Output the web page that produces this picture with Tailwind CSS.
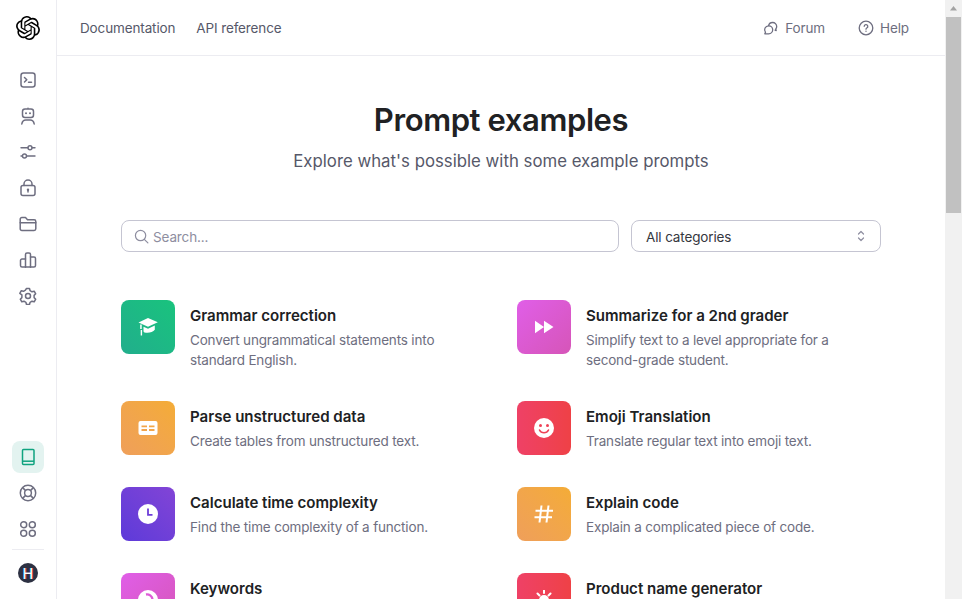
<!DOCTYPE html>
<html lang="en">
<head>
    <meta charset="UTF-8">
    <meta name="viewport" content="width=device-width, initial-scale=1.0">
    <title>Prompt examples - OpenAI API</title>
    <script src="https://cdn.jsdelivr.net/npm/@tailwindcss/browser@4"></script>
</head>
<body class="h-[599px] w-[962px] overflow-hidden bg-white font-['Inter',sans-serif] text-[#202123]">
<div class="flex h-[599px]">
    <!-- Sidebar -->
    <aside class="flex h-full w-[57px] shrink-0 flex-col items-center border-r border-[#ececf1] pt-4 pb-4 text-[#6e6e80]">
        <svg class="h-6 w-6 text-black" viewBox="0 0 24 24" fill="currentColor"><path d="M22.2819 9.8211a5.9847 5.9847 0 0 0-.5157-4.9108 6.0462 6.0462 0 0 0-6.5098-2.9A6.0651 6.0651 0 0 0 4.9807 4.1818a5.9847 5.9847 0 0 0-3.9977 2.9 6.0462 6.0462 0 0 0 .7427 7.0966 5.98 5.98 0 0 0 .511 4.9107 6.051 6.051 0 0 0 6.5146 2.9001A5.9847 5.9847 0 0 0 13.2599 24a6.0557 6.0557 0 0 0 5.7718-4.2058 5.9894 5.9894 0 0 0 3.9977-2.9001 6.0557 6.0557 0 0 0-.7475-7.0729zm-9.022 12.6081a4.4755 4.4755 0 0 1-2.8764-1.0408l.1419-.0804 4.7783-2.7582a.7948.7948 0 0 0 .3927-.6813v-6.7369l2.02 1.1686a.071.071 0 0 1 .038.052v5.5826a4.504 4.504 0 0 1-4.4945 4.4944zm-9.6607-4.1254a4.4708 4.4708 0 0 1-.5346-3.0137l.142.0852 4.783 2.7582a.7712.7712 0 0 0 .7806 0l5.8428-3.3685v2.3324a.0804.0804 0 0 1-.0332.0615L9.74 19.9502a4.4992 4.4992 0 0 1-6.1408-1.6464zM2.3408 7.8956a4.485 4.485 0 0 1 2.3655-1.9728V11.6a.7664.7664 0 0 0 .3879.6765l5.8144 3.3543-2.0201 1.1685a.0757.0757 0 0 1-.071 0l-4.8303-2.7865A4.504 4.504 0 0 1 2.3408 7.872zm16.5963 3.8558L13.1038 8.364 15.1192 7.2a.0757.0757 0 0 1 .071 0l4.8303 2.7913a4.4944 4.4944 0 0 1-.6765 8.1042v-5.6772a.79.79 0 0 0-.407-.667zm2.0107-3.0231l-.142-.0852-4.7735-2.7818a.7759.7759 0 0 0-.7854 0L9.409 9.2297V6.8974a.0662.0662 0 0 1 .0284-.0615l4.8303-2.7866a4.4992 4.4992 0 0 1 6.6802 4.66zM8.3065 12.863l-2.02-1.1638a.0804.0804 0 0 1-.038-.0567V6.0742a4.4992 4.4992 0 0 1 7.3757-3.4537l-.142.0805L8.704 5.459a.7948.7948 0 0 0-.3927.6813zm1.0976-2.3654l2.602-1.4998 2.6069 1.4998v2.9994l-2.5974 1.4997-2.6067-1.4997Z"/></svg>

        <nav class="mt-[22px] flex flex-col">
            <!-- terminal -->
            <span class="flex h-9 w-8 items-center justify-center">
                <svg class="h-[18px] w-[18px]" viewBox="0 0 18 18" fill="none" stroke="currentColor" stroke-width="1.5" stroke-linecap="round" stroke-linejoin="round"><rect x="2" y="2" width="14" height="14" rx="2.5"/><path d="M5.5 6.5 7.8 8.7 5.5 11"/><path d="M9.5 11.2h3"/></svg>
            </span>
            <!-- robot -->
            <span class="flex h-9 w-8 items-center justify-center">
                <svg class="h-[18px] w-[18px]" viewBox="0 0 18 18" fill="none" stroke="currentColor" stroke-width="1.5" stroke-linecap="round" stroke-linejoin="round"><rect x="3.500" y="2" width="11" height="8.500" rx="2.500"/><path d="M2.800 17c.4-2.400 2-4 4-4h4.400c2 0 3.600 1.600 4 4"/><circle cx="7" cy="6.200" r="1" fill="currentColor" stroke="none"/><circle cx="11" cy="6.200" r="1" fill="currentColor" stroke="none"/><circle cx="9" cy="1.200" r=".8" fill="currentColor" stroke="none"/></svg>
            </span>
            <!-- sliders -->
            <span class="flex h-9 w-8 items-center justify-center">
                <svg class="h-[18px] w-[18px]" viewBox="0 0 18 18" fill="none" stroke="currentColor" stroke-width="1.4" stroke-linecap="round"><path d="M2 4.800h7M13 4.800h3M2 13h1.500M7.500 13H16"/><circle cx="11" cy="4.800" r="2"/><circle cx="5.500" cy="13" r="2"/></svg>
            </span>
            <!-- lock -->
            <span class="flex h-9 w-8 items-center justify-center">
                <svg class="h-[18px] w-[18px]" viewBox="0 0 18 18" fill="none" stroke="currentColor" stroke-width="1.500" stroke-linecap="round" stroke-linejoin="round"><rect x="2" y="6.500" width="14" height="10" rx="2"/><path d="M5 6.500V5a4 4 0 0 1 8 0v1.500"/><circle cx="9" cy="10.800" r="1.200" fill="currentColor" stroke="none"/><path d="M9 11v2"/></svg>
            </span>
            <!-- folder -->
            <span class="flex h-9 w-8 items-center justify-center">
                <svg class="h-[18px] w-[18px]" viewBox="0 0 18 18" fill="none" stroke="currentColor" stroke-width="1.500" stroke-linecap="round" stroke-linejoin="round"><path d="M1.200 4.200c0-1 .8-1.700 1.700-1.700h3.600l2 2.200h6.600c1 0 1.700.8 1.700 1.700v7.400c0 1-.8 1.700-1.700 1.700H2.900c-1 0-1.700-.8-1.700-1.700Z"/><path d="M1.200 7.800h15.600"/></svg>
            </span>
            <!-- chart -->
            <span class="flex h-9 w-8 items-center justify-center">
                <svg class="h-[18px] w-[18px]" viewBox="0 0 18 18" fill="none" stroke="currentColor" stroke-width="1.500" stroke-linecap="round" stroke-linejoin="round"><path d="M6.500 16V3.500A1.500 1.500 0 0 1 8 2h2a1.500 1.500 0 0 1 1.500 1.500V16"/><path d="M6.500 16H3a1.500 1.500 0 0 1-1.500-1.500V9.500A1.500 1.500 0 0 1 3 8h3.500"/><path d="M11.500 16H15a1.500 1.500 0 0 0 1.500-1.500v-7A1.500 1.500 0 0 0 15 6h-3.500"/><path d="M6.500 16h5"/></svg>
            </span>
            <!-- gear -->
            <span class="flex h-9 w-8 items-center justify-center">
                <svg class="h-[18px] w-[18px]" viewBox="0 0 18 18" fill="none" stroke="currentColor" stroke-width="1.500" stroke-linecap="round" stroke-linejoin="round"><circle cx="9" cy="9" r="2.500"/><path d="M7.500 1.500h3l.6 2.200 1.900 1.100 2.200-.6 1.500 2.600-1.600 1.600v2.200l1.600 1.600-1.500 2.600-2.200-.6-1.900 1.100-.6 2.200h-3l-.6-2.200-1.900-1.100-2.200.6-1.500-2.600 1.600-1.600V7.900L.8 6.300l1.500-2.600 2.200.6 1.900-1.100Z"/></svg>
            </span>
        </nav>

        <div class="mt-auto flex flex-col items-center gap-1">
            <span class="flex h-8 w-8 items-center justify-center rounded-lg bg-[#e3f3f0] text-[#10a37f]">
                <svg class="h-[18px] w-[18px]" viewBox="0 0 18 18" fill="none" stroke="currentColor" stroke-width="1.500" stroke-linejoin="round"><rect x="3.500" y="1.500" width="11.500" height="15" rx="1"/><path d="M3.500 13.200H15"/></svg>
            </span>
            <span class="flex h-8 w-8 items-center justify-center">
                <svg class="h-[18px] w-[18px]" viewBox="0 0 18 18" fill="none" stroke="currentColor" stroke-width="1.500"><circle cx="9" cy="9" r="7.700"/><circle cx="9" cy="9" r="3.400"/><path d="m3.600 3.600 3 3M14.400 3.600l-3 3M3.600 14.400l3-3M14.400 14.400l-3-3"/></svg>
            </span>
            <span class="flex h-8 w-8 items-center justify-center">
                <svg class="h-[18px] w-[18px]" viewBox="0 0 18 18" fill="none" stroke="currentColor" stroke-width="1.500"><circle cx="4.700" cy="4.700" r="3"/><circle cx="13.300" cy="4.700" r="3"/><circle cx="4.700" cy="13.300" r="3"/><circle cx="13.300" cy="13.300" r="3"/></svg>
            </span>
        </div>
        <div class="mt-1 h-px w-8 bg-[#ececf1]"></div>
        <div class="mt-[13px] flex h-5 w-5 items-center justify-center rounded-full bg-[#2d3142] text-[14px] font-normal text-white [text-shadow:-0.6px_0_#38bdf8,0.6px_0_#ef4444]">H</div>
    </aside>

    <!-- Main -->
    <div class="flex h-full w-[888px] shrink-0 flex-col overflow-hidden">
        <header class="flex h-[56px] shrink-0 items-center justify-between border-b border-[#ececf1] pr-9 pl-[23px] text-[13.5px] tracking-[-0.13px] text-[#565869]">
            <div class="flex gap-[21px] pt-px">
                <a>Documentation</a>
                <a>API reference</a>
            </div>
            <div class="flex gap-[33px]">
                <a class="flex items-center gap-1.5 text-[#6e6e80]">
                    <svg class="h-4 w-4" viewBox="0 0 16 16" fill="none" stroke="currentColor" stroke-width="1.300" stroke-linejoin="round"><path d="M5.500 6.200A4.200 4.200 0 0 1 9.700 2.500a4.100 4.100 0 0 1 4 4c0 1-.3 1.800-.9 2.500l.4 1.500-1.600-.3"/><path d="M5.700 5.800a4 4 0 0 1 4 4 4 4 0 0 1-4 4H1.800l.7-1.500a4 4 0 0 1 3.200-6.500Z"/></svg>
                    <span class="pt-px">Forum</span>
                </a>
                <a class="flex items-center gap-1.5 text-[#6e6e80]">
                    <svg class="h-4 w-4" viewBox="0 0 16 16" fill="none" stroke="currentColor" stroke-width="1.300" stroke-linecap="round"><circle cx="8" cy="8" r="6.800"/><path d="M6.200 6.300A1.800 1.800 0 1 1 8.800 8c-.5.300-.8.600-.8 1.200"/><circle cx="8" cy="11.300" r=".7" fill="currentColor" stroke="none"/></svg>
                    <span class="pt-px">Help</span>
                </a>
            </div>
        </header>

        <main class="px-16 pt-[44px]">
            <h1 class="text-center text-[31px] leading-10 font-semibold tracking-[-0.4px] text-[#202123]">Prompt examples</h1>
            <p class="mt-[9px] text-center text-[16.8px] leading-6 text-[#565869]">Explore what's possible with some example prompts</p>

            <div class="mt-[47px] flex gap-3">
                <div class="flex h-8 w-[498px] items-center gap-1 rounded-lg border border-[#c5c5d2] px-3 text-[13.5px] tracking-[-0.13px] text-[#8e8ea0]">
                    <svg class="h-[15px] w-[15px]" viewBox="0 0 16 16" fill="none" stroke="currentColor" stroke-width="1.300" stroke-linecap="round"><circle cx="7" cy="7" r="5.500"/><path d="m11 11 3.800 3.800"/></svg>
                    <span class="pt-0.5">Search...</span>
                </div>
                <div class="flex h-8 w-[250px] items-center justify-between rounded-lg border border-[#c5c5d2] pr-3 pl-[14px] text-[13.5px] tracking-[-0.13px] text-[#353740]">
                    <span class="pt-0.5">All categories</span>
                    <svg class="h-3.5 w-3.5 text-[#8e8ea0]" viewBox="0 0 14 14" fill="none" stroke="currentColor" stroke-width="1.200" stroke-linecap="round" stroke-linejoin="round"><path d="m4.500 5 2.500-2.500L9.500 5M4.500 9l2.500 2.500L9.500 9"/></svg>
                </div>
            </div>

            <div class="mt-12 grid grid-cols-[380px_380px] gap-x-4 gap-y-8">
                <div class="flex gap-[15px]">
                    <div class="flex h-[54px] w-[54px] shrink-0 items-center justify-center rounded-lg bg-gradient-to-tr from-[#21ae8c] to-[#19c37d] text-white">
                        <svg class="h-5 w-5" viewBox="0 0 20 20" fill="currentColor"><path d="M10 1 19.800 5.200 10 9.800 .5 5.400Z"/><path d="M5.500 9.800 10 11.800 16.800 8.600v4.200c-2 2.500-6.300 3.700-10.300 2.700-.6-.2-1-.6-1-1.200Z"/><path d="M2.200 7.500h1.500v4.500H2.200ZM2.700 13h1.400v5.500H2.700Z"/></svg>
                    </div>
                    <div class="pt-[5px]">
                        <h3 class="text-[15.05px] leading-[22px] font-semibold">Grammar correction</h3>
                        <p class="mt-[3px] -mb-px w-[270px] text-[13.5px] leading-5 tracking-[-0.17px] text-[#6e6e80]">Convert ungrammatical statements into standard English.</p>
                    </div>
                </div>
                <div class="flex gap-[15px]">
                    <div class="flex h-[54px] w-[54px] shrink-0 items-center justify-center rounded-lg bg-gradient-to-br from-[#e05ee8] to-[#d655b8] text-white">
                        <svg class="h-5 w-5" viewBox="0 0 20 20" fill="currentColor"><path d="M1 3.800 10 10 1 16.200ZM10 3.800 19.500 10 10 16.200Z"/></svg>
                    </div>
                    <div class="pt-[5px]">
                        <h3 class="text-[15.05px] leading-[22px] font-semibold">Summarize for a 2nd grader</h3>
                        <p class="mt-[3px] -mb-px w-[270px] text-[13.5px] leading-5 tracking-[-0.17px] text-[#6e6e80]">Simplify text to a level appropriate for a second-grade student.</p>
                    </div>
                </div>
                <div class="flex gap-[15px]">
                    <div class="flex h-[54px] w-[54px] shrink-0 items-center justify-center rounded-lg bg-gradient-to-bl from-[#f4ac36] to-[#ef9f5a] text-white">
                        <svg class="h-5 w-5" viewBox="0 0 20 20" fill="currentColor"><path fill-rule="evenodd" d="M2.500 3h15A2 2 0 0 1 19.500 5v10a2 2 0 0 1-2 2h-15a2 2 0 0 1-2-2V5a2 2 0 0 1 2-2ZM3.500 7.500v1.800h5.500V7.500Zm7.500 0v1.800h5.500V7.500Zm-7.500 3.600v1.800h5.500v-1.800Zm7.500 0v1.800h5.500v-1.800Z"/></svg>
                    </div>
                    <div class="pt-[5px]">
                        <h3 class="text-[15.05px] leading-[22px] font-semibold">Parse unstructured data</h3>
                        <p class="mt-[3px] -mb-px text-[13.5px] leading-5 tracking-[-0.17px] text-[#6e6e80]">Create tables from unstructured text.</p>
                    </div>
                </div>
                <div class="flex gap-[15px]">
                    <div class="flex h-[54px] w-[54px] shrink-0 items-center justify-center rounded-lg bg-gradient-to-r from-[#ef4166] to-[#ef4146] text-white">
                        <svg class="h-5 w-5" viewBox="0 0 20 20"><circle cx="10" cy="10" r="10" fill="currentColor"/><circle cx="6.500" cy="7.500" r="1.500" fill="#ef4156"/><circle cx="13.500" cy="7.500" r="1.500" fill="#ef4156"/><path d="M5.500 12a5 5 0 0 0 9 0" fill="none" stroke="#ef4156" stroke-width="1.600" stroke-linecap="round"/></svg>
                    </div>
                    <div class="pt-[5px]">
                        <h3 class="text-[15.05px] leading-[22px] font-semibold">Emoji Translation</h3>
                        <p class="mt-[3px] -mb-px text-[13.5px] leading-5 tracking-[-0.17px] text-[#6e6e80]">Translate regular text into emoji text.</p>
                    </div>
                </div>
                <div class="flex gap-[15px]">
                    <div class="flex h-[54px] w-[54px] shrink-0 items-center justify-center rounded-lg bg-gradient-to-tr from-[#5d3ad9] to-[#8244d6] text-white">
                        <svg class="h-5 w-5" viewBox="0 0 20 20"><circle cx="10" cy="10" r="10" fill="currentColor"/><path d="M10 4.500V10.800h4.500" fill="none" stroke="#6d3dd8" stroke-width="1.800"/></svg>
                    </div>
                    <div class="pt-[5px]">
                        <h3 class="text-[15.05px] leading-[22px] font-semibold">Calculate time complexity</h3>
                        <p class="mt-[3px] -mb-px text-[13.5px] leading-5 tracking-[-0.17px] text-[#6e6e80]">Find the time complexity of a function.</p>
                    </div>
                </div>
                <div class="flex gap-[15px]">
                    <div class="flex h-[54px] w-[54px] shrink-0 items-center justify-center rounded-lg bg-gradient-to-bl from-[#f4ac36] to-[#ef9f5a] text-white">
                        <svg class="h-5 w-5" viewBox="0 0 20 20" fill="none" stroke="currentColor" stroke-width="2"><path d="M7.500 1.500 5.500 18.500M14.500 1.500l-2 17M1.500 6.800h17.500M.5 13.200h17.500"/></svg>
                    </div>
                    <div class="pt-[5px]">
                        <h3 class="text-[15.05px] leading-[22px] font-semibold">Explain code</h3>
                        <p class="mt-[3px] -mb-px text-[13.5px] leading-5 tracking-[-0.17px] text-[#6e6e80]">Explain a complicated piece of code.</p>
                    </div>
                </div>
                <div class="flex gap-[15px]">
                    <div class="flex h-[54px] w-[54px] shrink-0 items-center justify-center rounded-lg bg-gradient-to-br from-[#e05ee8] to-[#d655b8] text-white">
                        <svg class="h-5 w-5" viewBox="0 0 20 20"><circle cx="10" cy="10" r="10" fill="currentColor"/><path d="M8 4.500a5.500 5.500 0 0 1 6.500 4.500" fill="none" stroke="#de5cd8" stroke-width="2.400"/></svg>
                    </div>
                    <div class="pt-[5px]">
                        <h3 class="text-[15.05px] leading-[22px] font-semibold">Keywords</h3>
                        <p class="mt-[3px] -mb-px text-[13.5px] leading-5 tracking-[-0.17px] text-[#6e6e80]">Extract keywords from a block of text.</p>
                    </div>
                </div>
                <div class="flex gap-[15px]">
                    <div class="flex h-[54px] w-[54px] shrink-0 items-center justify-center rounded-lg bg-gradient-to-r from-[#ef4166] to-[#ef4146] text-white">
                        <svg class="h-5 w-5" viewBox="0 0 20 20" fill="currentColor"><circle cx="10" cy="10" r="5"/><path d="M10 .5v2.500M3.500 3.500l2 2M16.500 3.500l-2 2M.5 10h2.500M17 10h2.500" stroke="currentColor" stroke-width="2" stroke-linecap="round"/></svg>
                    </div>
                    <div class="pt-[5px]">
                        <h3 class="text-[15.05px] leading-[22px] font-semibold">Product name generator</h3>
                        <p class="mt-[3px] -mb-px text-[13.5px] leading-5 tracking-[-0.17px] text-[#6e6e80]">Create product names from a description.</p>
                    </div>
                </div>
            </div>
        </main>
    </div>

    <!-- Scrollbar -->
    <div class="flex h-full w-[17px] shrink-0 flex-col items-center bg-[#f1f1f1]">
        <svg class="h-[17px] w-[17px]" viewBox="0 0 17 17" fill="#a3a3a3"><path d="M8.500 6 12 10.500H5Z"/></svg>
        <div class="h-[196px] w-[15px] bg-[#c1c1c1]"></div>
    </div>
</div>
</body>
</html>
